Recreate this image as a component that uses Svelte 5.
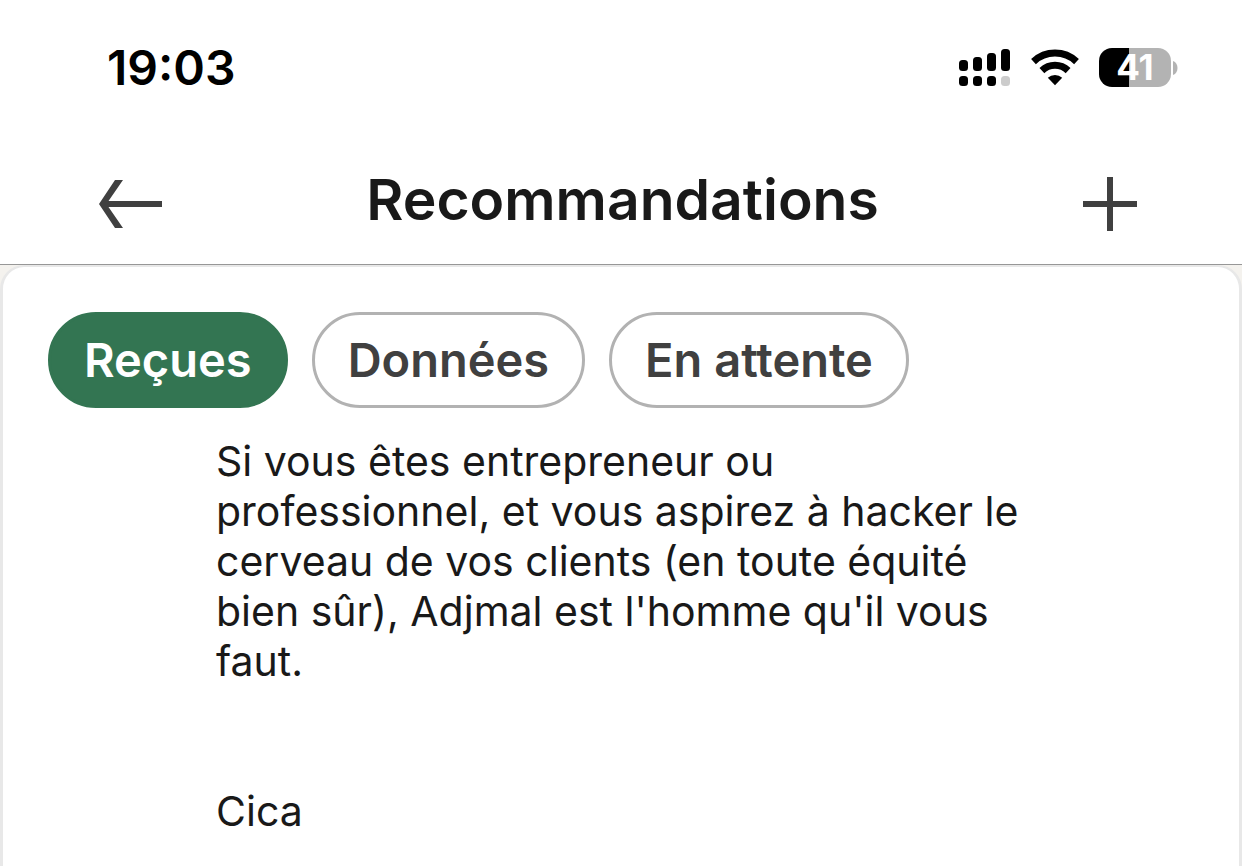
<script>
  const tabs = ['Reçues', 'Données', 'En attente'];
  let selected = $state('Reçues');
</script>

<div class="screen">
  <div class="status">
    <time>19:03</time>
    <div class="indicators">
      <svg width="52" height="39" viewBox="0 0 52 39" aria-hidden="true">
        <rect x="0" y="12" width="9" height="11" rx="3.5" />
        <rect x="14" y="9" width="9" height="14" rx="3.5" />
        <rect x="28" y="5" width="9" height="18" rx="3.5" />
        <rect x="42" y="1" width="9" height="22" rx="3.5" />
        <rect x="0" y="28" width="9" height="10" rx="3.5" />
        <rect x="14" y="28" width="9" height="10" rx="3.5" />
        <rect x="28" y="28" width="9" height="10" rx="3.5" />
        <rect x="42" y="28" width="9" height="10" rx="3.5" fill="#ccc" />
      </svg>
      <svg width="48" height="39" viewBox="0 0 48 39" aria-hidden="true">
        <g fill="none" stroke="#000" stroke-width="7">
          <path d="M2.5 13.6A31.5 31.5 0 0 1 45.5 13.6" />
          <path d="M10.9 22.6A19 19 0 0 1 37.1 22.6" />
        </g>
        <path d="M24 37.2L16.8 29.8A10.8 10.8 0 0 1 31.2 29.8Z" />
      </svg>
      <div class="battery">
        <span class="level">41</span>
        <svg width="5" height="14" viewBox="0 0 5 14" aria-hidden="true">
          <path d="M0 0C6 2 6 12 0 14Z" fill="#b3b3b3" />
        </svg>
      </div>
    </div>
  </div>

  <header>
    <button class="icon" aria-label="Retour">
      <svg width="63" height="48" viewBox="0 0 63 48">
        <path d="M16 0H24L9.5 21H63V27H9.5L24 48H16L0 24Z" fill="#404040" />
      </svg>
    </button>
    <h1>Recommandations</h1>
    <button class="icon" aria-label="Ajouter">
      <svg width="54" height="54" viewBox="0 0 54 54">
        <path d="M24 0H30V24H54V30H30V54H24V30H0V24H24Z" fill="#404040" />
      </svg>
    </button>
  </header>

  <main>
    <section class="card">
      <nav>
        {#each tabs as tab}
          <button
            class="tab"
            class:active={selected === tab}
            aria-pressed={selected === tab}
            onclick={() => (selected = tab)}>{tab}</button>
        {/each}
      </nav>
      <div class="message">
        <p>
          Si vous êtes entrepreneur ou professionnel, et vous aspirez à hacker le
          cerveau de vos clients (en toute équité bien sûr), Adjmal est l'homme
          qu'il vous faut.
        </p>
        <p>Cica</p>
      </div>
    </section>
  </main>
</div>

<style>
  :global(body) {
    margin: 0;
    background: #fff;
  }
  :global(html),
  :global(body),
  :global(#app) {
    height: 100%;
  }
  .screen {
    min-height: 100%;
    display: flex;
    flex-direction: column;
    font-family: Inter, 'Liberation Sans', sans-serif;
    color: #191919;
  }
  .status {
    display: flex;
    justify-content: space-between;
    align-items: center;
    height: 135px;
    padding: 0 64px 0 107px;
    box-sizing: border-box;
    color: #000;
  }
  time {
    font-size: 48px;
    line-height: 59px;
    font-weight: 600;
  }
  .indicators {
    display: flex;
    align-items: center;
    gap: 20px;
  }
  .battery {
    display: flex;
    align-items: center;
    gap: 2px;
  }
  .level {
    width: 72px;
    height: 39px;
    border-radius: 13px;
    background: linear-gradient(90deg, #000 42%, #b3b3b3 42%);
    color: #fff;
    font-size: 35px;
    line-height: 39px;
    font-weight: 700;
    text-align: center;
  }
  header {
    display: flex;
    justify-content: space-between;
    align-items: center;
    height: 130px;
    box-sizing: border-box;
    padding: 0 105px 0 99px;
    border-bottom: 1px solid #979797;
  }
  button {
    font-family: inherit;
    cursor: pointer;
  }
  .icon {
    display: flex;
    padding: 8px 0 0;
    border: 0;
    background: none;
  }
  h1 {
    margin: 0;
    font-size: 57px;
    line-height: 72px;
    font-weight: 600;
  }
  main {
    flex: 1;
    display: flex;
    background: #f4f2ee;
    overflow: hidden;
  }
  .card {
    flex: 1;
    border: 3px solid #e8e8e8;
    border-width: 2px 3px 0;
    border-radius: 24px 24px 0 0;
    background: #fff;
  }
  nav {
    display: flex;
    gap: 24px;
    padding: 45px 45px 0;
  }
  .tab {
    height: 96px;
    padding: 0 33px;
    border: 3px solid #b2b2b2;
    border-radius: 48px;
    background: #fff;
    color: #404040;
    font-size: 47px;
    line-height: 56px;
    font-weight: 600;
  }
  .tab.active {
    border-color: #337552;
    background: #337552;
    color: #fff;
  }
  .message {
    display: grid;
    gap: 100px;
    padding: 28px 195px 0 213px;
    font-size: 41px;
    line-height: 50px;
  }
  p {
    margin: 0;
  }
</style>
